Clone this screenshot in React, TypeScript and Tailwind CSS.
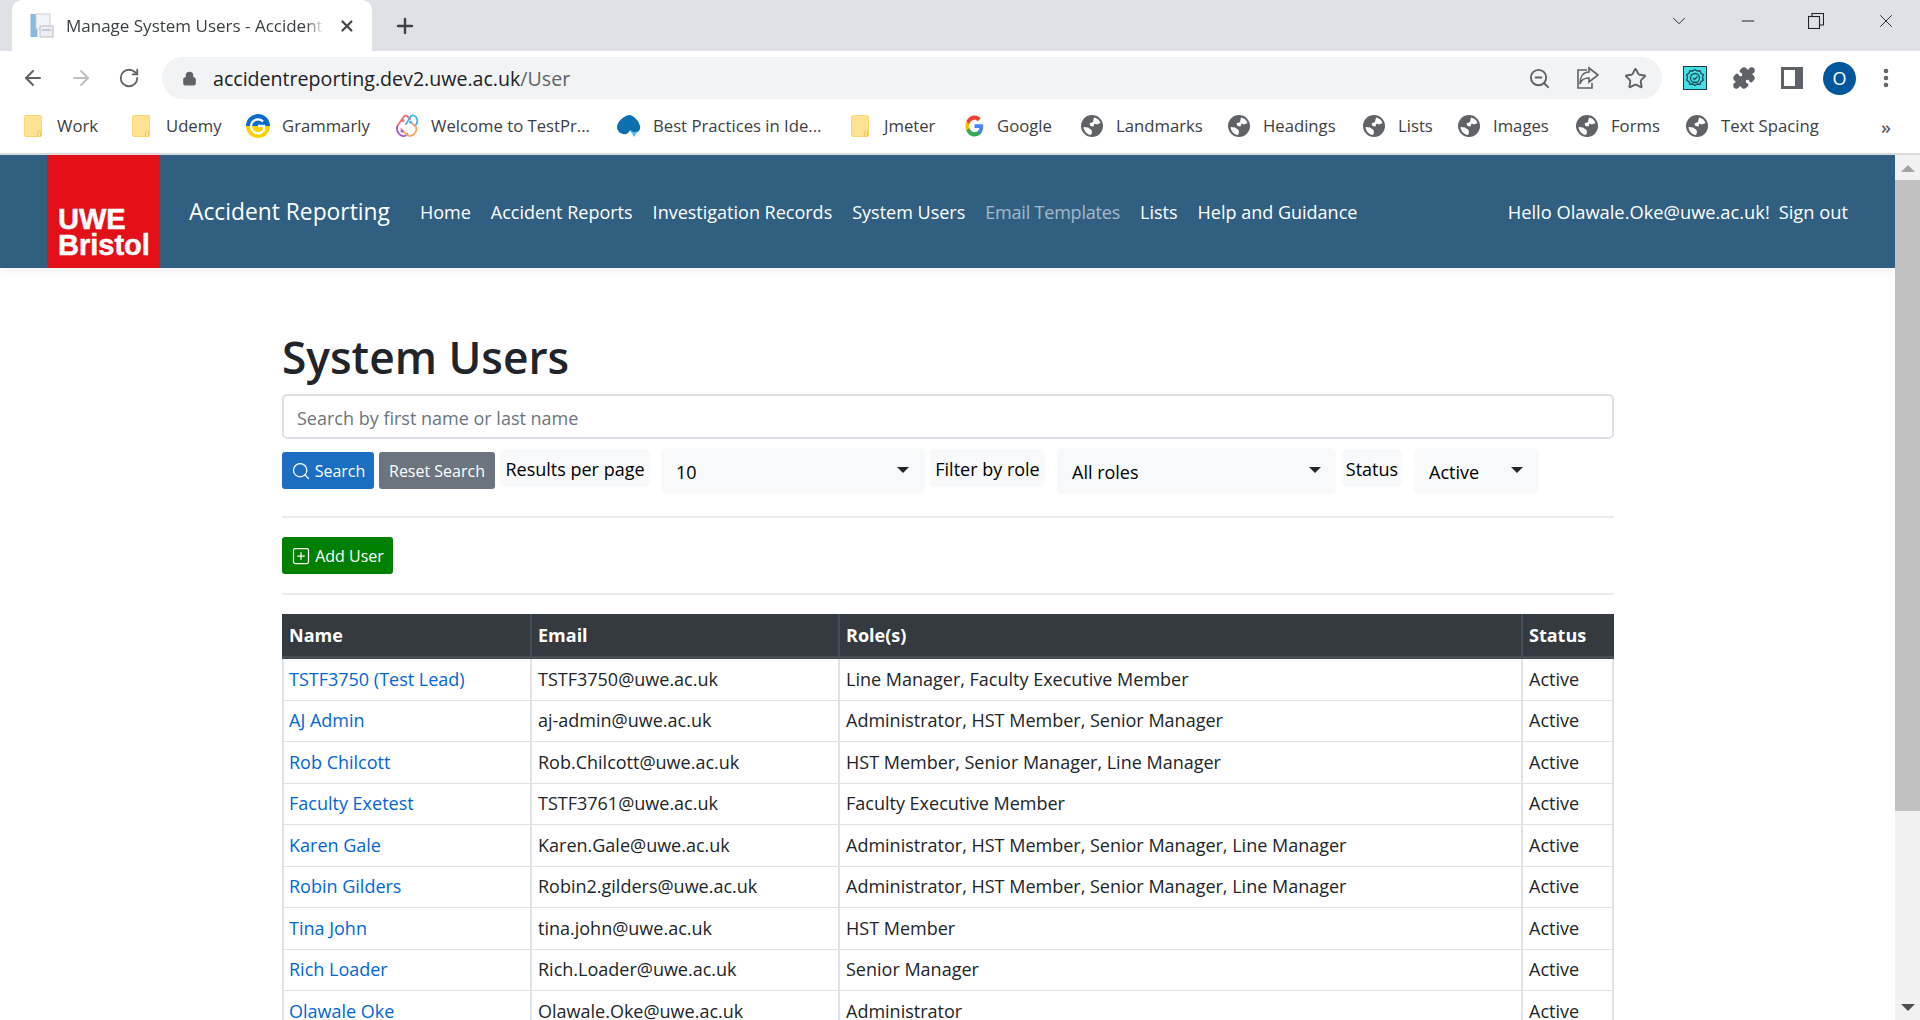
import { ArrowLeft, ArrowRight, RotateCw, Lock, ZoomOut, Star, Plus, X, Minus, ChevronDown, EllipsisVertical, Search, SquarePlus, Puzzle } from "lucide-react";

const font = "font-['Open_Sans','Noto_Sans',sans-serif]";

const FolderIcon = () => (
  <svg width="18" height="22" viewBox="0 0 18 22" className="shrink-0">
    <rect x="0.5" y="0.5" width="17" height="21" rx="1.5" fill="#fde293" stroke="#f7d774" />
    <path d="M13.5 21.500v-4a1.500 1.500 0 0 1 3 0v4" fill="none" stroke="#eec759" strokeWidth="1" />
  </svg>
);

const GlobeIcon = () => (
  <svg width="22" height="22" viewBox="0 0 22 22" className="shrink-0">
    <circle cx="11" cy="11" r="11" fill="#5f6368" />
    <path d="M13 2.500c3 .5 5.500 2.500 6.500 5.500l-3.500 1.500-2.500-1-1 3-3-.5-1-2.500 3.500-1.500z" fill="#fff" />
    <path d="M2.500 12l4.500.5 3.500 2.500.5 2.500-1 2.500c-4-.5-7-3.500-7.500-8z" fill="#fff" />
  </svg>
);

const GrammarlyIcon = () => (
  <svg width="24" height="24" viewBox="0 0 24 24" className="shrink-0">
    <path d="M0 12a12 12 0 0 1 24 0z" fill="#0f6bc9" />
    <path d="M0 12a12 12 0 0 0 24 0z" fill="#fbd100" />
    <path d="M17 7.500a7 7 0 1 0 1 8.500" fill="none" stroke="#fff" strokeWidth="2.400" />
    <path d="M12 12h6v5" fill="none" stroke="#fff" strokeWidth="2.400" />
  </svg>
);

const TestPadIcon = () => (
  <svg width="24" height="24" viewBox="0 0 24 24" fill="none" strokeWidth="1.800" strokeLinecap="round" className="shrink-0">
    <path d="M3 11 9 2.500c1-1.200 2.500-1 3.500 0L15 5" stroke="#ef6a7a" />
    <path d="M11 10l5-8c2-1.500 5 0 6 3s0 5-2 7" stroke="#3db5e6" />
    <path d="M2.500 12c-1.500 3 0 7 3 9 2 1.500 4 1.500 6 0l1-1" stroke="#a45cc0" />
    <path d="M6 15l6 6c2 1.500 5 1 7-1s3-5 2-7l-4-4" stroke="#f5a66c" />
    <circle cx="8" cy="6.500" r="1.500" fill="#ef6a7a" stroke="none" />
    <circle cx="15.500" cy="8" r="1.500" fill="#3db5e6" stroke="none" />
    <circle cx="7" cy="17" r="1.500" fill="#a45cc0" stroke="none" />
  </svg>
);

const DropIcon = () => (
  <svg width="24" height="24" viewBox="0 0 24 24" className="shrink-0">
    <path d="M13 1c5 2 9 6 10 11 1 4-2 7-6 7-2 0-3-1-4-3-1 3-4 5-7 4-4-1-6-4-6-7C0 8 7 1 13 1z" fill="#0c6fb0" />
    <path d="M13 16l4 7 4-6c-3 2-6 1-8-1z" fill="#4fc3f0" />
  </svg>
);

const GoogleIcon = () => (
  <svg width="19" height="22" viewBox="0 0 48 48" preserveAspectRatio="none" className="shrink-0">
    <path fill="#4285F4" d="M46 24.5c0-1.6-.1-3.100-.4-4.500H24v8.500h12.400c-.5 2.900-2.100 5.300-4.600 7v5.800h7.400c4.300-4 6.800-9.900 6.800-16.800z" />
    <path fill="#34A853" d="M24 47c6.200 0 11.400-2 15.200-5.500l-7.400-5.800c-2 1.400-4.700 2.200-7.800 2.200-6 0-11.100-4-12.900-9.500H3.500v6C7.300 41.900 15 47 24 47z" />
    <path fill="#FBBC05" d="M11.100 28.400c-.5-1.400-.7-2.900-.7-4.400s.3-3 .7-4.400v-6H3.500C2 16.700 1 20.200 1 24s.9 7.300 2.500 10.400z" />
    <path fill="#EA4335" d="M24 10.100c3.400 0 6.400 1.200 8.800 3.400l6.600-6.600C35.400 3.200 30.200 1 24 1 15 1 7.300 6.100 3.500 13.600l7.600 6c1.800-5.500 6.900-9.500 12.900-9.500z" />
  </svg>
);

const bookmarks = [
  { label: "Work", icon: <FolderIcon />, item: "w-[108px]", gap: "gap-[15px]" },
  { label: "Udemy", icon: <FolderIcon />, item: "w-[114px]", gap: "gap-[16px]" },
  { label: "Grammarly", icon: <GrammarlyIcon />, item: "w-[149px]", gap: "gap-[12px]" },
  { label: "Welcome to TestPr...", icon: <TestPadIcon />, item: "w-[222px]", gap: "gap-[12px]" },
  { label: "Best Practices in Ide...", icon: <DropIcon />, item: "w-[234px]", gap: "gap-[12px]" },
  { label: "Jmeter", icon: <FolderIcon />, item: "w-[114px]", gap: "gap-[15px]" },
  { label: "Google", icon: <GoogleIcon />, item: "w-[116px]", gap: "gap-[13px]" },
  { label: "Landmarks", icon: <GlobeIcon />, item: "w-[147px]", gap: "gap-[13px]" },
  { label: "Headings", icon: <GlobeIcon />, item: "w-[135px]", gap: "gap-[13px]" },
  { label: "Lists", icon: <GlobeIcon />, item: "w-[95px]", gap: "gap-[13px]" },
  { label: "Images", icon: <GlobeIcon />, item: "w-[118px]", gap: "gap-[13px]" },
  { label: "Forms", icon: <GlobeIcon />, item: "w-[110px]", gap: "gap-[13px]" },
  { label: "Text Spacing", icon: <GlobeIcon />, item: "w-[160px]", gap: "gap-[13px]" },
];

const users = [
  ["TSTF3750 (Test Lead)", "TSTF3750@uwe.ac.uk", "Line Manager, Faculty Executive Member"],
  ["AJ Admin", "aj-admin@uwe.ac.uk", "Administrator, HST Member, Senior Manager"],
  ["Rob Chilcott", "Rob.Chilcott@uwe.ac.uk", "HST Member, Senior Manager, Line Manager"],
  ["Faculty Exetest", "TSTF3761@uwe.ac.uk", "Faculty Executive Member"],
  ["Karen Gale", "Karen.Gale@uwe.ac.uk", "Administrator, HST Member, Senior Manager, Line Manager"],
  ["Robin Gilders", "Robin2.gilders@uwe.ac.uk", "Administrator, HST Member, Senior Manager, Line Manager"],
  ["Tina John", "tina.john@uwe.ac.uk", "HST Member"],
  ["Rich Loader", "Rich.Loader@uwe.ac.uk", "Senior Manager"],
  ["Olawale Oke", "Olawale.Oke@uwe.ac.uk", "Administrator"],
];

const navLinks = [
  { label: "Home", cls: "text-white" },
  { label: "Accident Reports", cls: "text-white" },
  { label: "Investigation Records", cls: "text-white" },
  { label: "System Users", cls: "text-white" },
  { label: "Email Templates", cls: "text-white/55 tracking-[-0.2px]" },
  { label: "Lists", cls: "text-white" },
  { label: "Help and Guidance", cls: "text-white" },
];

const Caret = () => <span className="-mt-[5px] w-0 h-0 border-x-[6px] border-x-transparent border-t-[6px] border-t-[#212529]" />;

const BrowserChrome = () => (
  <div className="shrink-0 bg-white text-[#3c4043]">
    <div className="h-[51px] bg-[#dee1e6] flex items-end pl-[12px]">
      <div className="w-[360px] h-[51px] bg-white rounded-t-[10px] flex items-center pl-[18px] pr-[16px]">
        <svg width="24" height="26" viewBox="0 0 24 26" className="shrink-0">
          <rect x="0.5" y="1" width="7" height="23" fill="#8ab8e0" />
          <rect x="6" y="1" width="14" height="15" fill="#f3f4f6" stroke="#c9ced4" />
          <rect x="10" y="13" width="13" height="11" fill="#eceef1" stroke="#b9bfc6" />
          <rect x="12" y="16" width="9" height="2" fill="#c5cad0" />
        </svg>
        <span className="ml-[12px] w-[260px] overflow-hidden whitespace-nowrap text-[17px] text-[#3c4043] [mask-image:linear-gradient(to_right,black_93%,transparent)]">
          Manage System Users - Accident
        </span>
        <X size={18} strokeWidth={3} className="ml-[14px] text-[#45484c]" />
      </div>
      <Plus size={24} strokeWidth={2.4} className="ml-[21px] mb-[13px] text-[#3c4043]" />
      <div className="flex-1" />
      <div className="h-[51px] flex items-center text-[#202124] pb-[9px]">
        <ChevronDown size={22} strokeWidth={1} className="mr-[48px]" />
        <Minus size={20} strokeWidth={1.2} className="mr-[50px]" />
        <svg width="16" height="16" viewBox="0 0 16 16" fill="none" stroke="#202124" strokeWidth="1.1" className="mr-[51px]">
          <rect x="0.5" y="3.500" width="11" height="12" />
          <path d="M4 3.500V0.500h11.500v11.500H11.500" />
        </svg>
        <X size={22} strokeWidth={1} className="mr-[23px]" />
      </div>
    </div>
    <div className="h-[54px] flex items-center">
      <ArrowLeft size={24} strokeWidth={2} className="ml-[21px] text-[#5f6368]" />
      <ArrowRight size={24} strokeWidth={2} className="ml-[24px] text-[#bcbfc3]" />
      <RotateCw size={22} strokeWidth={2} className="ml-[25px] text-[#5f6368]" />
      <div className="ml-[22px] w-[1500px] h-[42px] bg-[#f1f3f4] rounded-full flex items-center pl-[20px]">
        <Lock size={15} fill="#5f6368" strokeWidth={2} className="text-[#5f6368]" />
        <span className="ml-[16px] pt-[1px] text-[19.6px] text-[#202124]">
          accidentreporting.dev2.uwe.ac.uk<span className="text-[#5f6368]">/User</span>
        </span>
        <div className="flex-1" />
        <ZoomOut size={23} strokeWidth={2} className="text-[#5f6368]" />
        <svg width="24" height="24" viewBox="0 0 24 24" fill="none" stroke="#5f6368" strokeWidth="1.6" className="ml-[25px]">
          <path d="M11 4H2v18h14v-5M13 6v-4l9 7-9 7v-4c-5 0-8 2-9 6 0-7 3-12 9-12z" />
        </svg>
        <Star size={23} strokeWidth={2} className="ml-[24px] mr-[15px] text-[#5f6368]" />
      </div>
      <div className="ml-[21px] flex items-center">
        <div className="w-[24px] h-[24px] bg-[#45e0e6] border-[1.5px] border-[#1f3c48] flex items-center justify-center">
          <svg width="20" height="20" viewBox="0 0 20 20" fill="none" stroke="#1f4a58" strokeWidth="1.3">
            <path d="M10 1.500l2.300 1.500 2.700-.2 1 2.500 2.300 1.500-.8 2.700.8 2.700-2.300 1.500-1 2.500-2.700-.2-2.300 1.500-2.300-1.500-2.700.2-1-2.500-2.300-1.500.8-2.700-.8-2.700 2.300-1.500 1-2.500 2.700.2z" />
            <circle cx="10" cy="10" r="4.500" />
            <path d="M8 10l1.500 1.500 3-3" />
          </svg>
        </div>
        <Puzzle size={24} fill="#5f6368" strokeWidth={1.5} className="ml-[25px] text-[#5f6368]" />
        <div className="ml-[25px] w-[22px] h-[22px] border-[3px] border-[#5f6368] border-r-[8px]" />
        <div className="ml-[20px] w-[33px] h-[33px] rounded-full bg-[#01579b] text-white text-[18px] flex items-center justify-center">O</div>
        <EllipsisVertical size={24} strokeWidth={2.6} className="ml-[18px] text-[#5f6368]" />
      </div>
    </div>
    <div className="h-[50px] border-b-2 border-[#d9dadc] flex items-center pl-[24px] pb-[6px] text-[16.7px] text-[#3c4043] relative">
      {bookmarks.map((b) => (
        <div key={b.label} className={`${b.item} ${b.gap} shrink-0 flex items-center whitespace-nowrap`}>
          {b.icon}
          <span>{b.label}</span>
        </div>
      ))}
      <span className="absolute left-[1881px] top-[9px] text-[18px] font-semibold text-[#5f6368]">»</span>
    </div>
  </div>
);

const Header = () => (
  <header className="h-[113px] shrink-0 bg-[#305f82] flex text-white shadow-[0_4px_8px_rgba(0,0,0,0.05)]">
    <div className="ml-[47px] w-[113px] h-[113px] bg-[#e3101a] flex flex-col justify-end pl-[11px] pb-[10px] font-['Liberation_Sans',sans-serif] font-bold text-[29px] leading-[26px] [-webkit-text-stroke:0.5px_white]">
      <span>UWE</span>
      <span>Bristol</span>
    </div>
    <div className="flex items-center ml-[29px] pt-[1px]">
      <span className="text-[22.8px] mr-[20px]">Accident Reporting</span>
      <nav className="flex">
        {navLinks.map((l) => (
          <a key={l.label} className={`px-[10px] text-[18px] ${l.cls}`}>{l.label}</a>
        ))}
      </nav>
    </div>
    <div className="flex-1" />
    <div className="flex items-center text-[18.3px] pr-[47px] pt-[1px]">
      <span>Hello Olawale.Oke@uwe.ac.uk!</span>
      <span className="ml-[9px]">Sign out</span>
    </div>
  </header>
);

const Toolbar = () => (
  <div className="flex items-start text-[18px] text-[#212529]">
    <button className="mt-[4px] w-[92px] h-[37px] bg-[#1b6ec2] rounded-[3px] text-white text-[16px] flex items-center justify-center gap-[4px] pt-[1px]">
      <Search size={20} strokeWidth={1.5} />
      Search
    </button>
    <button className="mt-[4px] ml-[5px] w-[116px] h-[37px] bg-[#6c757d] rounded-[3px] text-white text-[16px] pt-[1px]">Reset Search</button>
    <div className="mt-[1px] ml-[5px] w-[150px] h-[38px] bg-[#f8f9fa] rounded-[5px] flex items-center justify-center text-black pt-[3px]">Results per page</div>
    <div className="ml-[11px] w-[264px] h-[46px] bg-[#f8f9fa] rounded-[5px] flex items-center justify-between pl-[15px] pr-[16px] text-black pt-[2px]">
      10
      <Caret />
    </div>
    <div className="mt-[1px] ml-[5px] w-[115px] h-[38px] bg-[#f8f9fa] rounded-[5px] flex items-center justify-center text-black pt-[3px]">Filter by role</div>
    <div className="ml-[12px] w-[279px] h-[46px] bg-[#f8f9fa] rounded-[5px] flex items-center justify-between pl-[15px] pr-[15px] text-black pt-[2px]">
      All roles
      <Caret />
    </div>
    <div className="mt-[1px] ml-[6px] w-[60px] h-[38px] bg-[#f8f9fa] rounded-[5px] flex items-center justify-center text-black pt-[3px]">Status</div>
    <div className="ml-[12px] w-[125px] h-[46px] bg-[#f8f9fa] rounded-[5px] flex items-center justify-between pl-[15px] pr-[16px] text-black pt-[2px]">
      Active
      <Caret />
    </div>
  </div>
);

const UserTable = () => (
  <table className="w-full table-fixed border-separate border-spacing-0 text-[18px] text-[#212529] text-left">
    <colgroup>
      <col className="w-[250px]" />
      <col className="w-[308px]" />
      <col className="w-[683px]" />
      <col className="w-[91px]" />
    </colgroup>
    <thead>
      <tr className="h-[45px] bg-[#343a40] text-white">
        {["Name", "Email", "Role(s)", "Status"].map((h, i) => (
          <th key={h} className={`font-bold border-b-[3px] border-[#454d55] ${i === 0 ? "pl-[7px] border-r-2" : i === 3 ? "pl-[6px]" : "pl-[6px] border-r-2"}`}>{h}</th>
        ))}
      </tr>
    </thead>
    <tbody>
      {users.map((u) => (
        <tr key={u[1]} className="h-[41.500px]">
          <td className="pl-[5px] border-l-2 border-r-2 border-b border-[#dee2e6] text-[#0366d6]">{u[0]}</td>
          <td className="pl-[6px] border-r-2 border-b border-[#dee2e6]">{u[1]}</td>
          <td className="pl-[6px] border-r-2 border-b border-[#dee2e6]">{u[2]}</td>
          <td className="pl-[6px] border-r-2 border-b border-[#dee2e6]">Active</td>
        </tr>
      ))}
    </tbody>
  </table>
);

const Scrollbar = () => (
  <div className="w-[25px] shrink-0 bg-[#f1f1f1] flex flex-col items-center">
    <span className="mt-[10px] w-0 h-0 border-x-[7px] border-x-transparent border-b-[7px] border-b-[#a3a3a3]" />
    <div className="mt-[8px] w-full h-[631px] bg-[#c1c1c1]" />
    <div className="flex-1" />
    <span className="mb-[9px] w-0 h-0 border-x-[7px] border-x-transparent border-t-[7px] border-t-[#505050]" />
  </div>
);

export default function App() {
  return (
    <div className={`h-[1020px] flex flex-col overflow-hidden bg-white ${font}`}>
      <BrowserChrome />
      <div className="flex-1 min-h-0 flex">
        <div className="flex-1 min-w-0 overflow-hidden">
          <Header />
          <main className="pl-[282px] pr-[281px] pt-[56px]">
            <h1 className="text-[44.3px] leading-[66px] font-semibold text-[#212529]">System Users</h1>
            <div className="mt-[4px] h-[45px] border-2 border-[#dcdfe6] rounded-[5px] flex items-center pl-[13px] pt-[3px] text-[18px] text-[#6c757d]">
              Search by first name or last name
            </div>
            <div className="mt-[9px]"><Toolbar /></div>
            <div className="mt-[22px] border-t-2 border-[#e9eaeb]" />
            <button className="mt-[19px] w-[111px] h-[37px] bg-[#008000] rounded-[3px] text-white text-[16px] flex items-center justify-center gap-[4px]">
              <SquarePlus size={20} strokeWidth={1.5} />
              Add User
            </button>
            <div className="mt-[19px] mb-[19px] border-t-2 border-[#e9eaeb]" />
            <UserTable />
          </main>
        </div>
        <Scrollbar />
      </div>
    </div>
  );
}
